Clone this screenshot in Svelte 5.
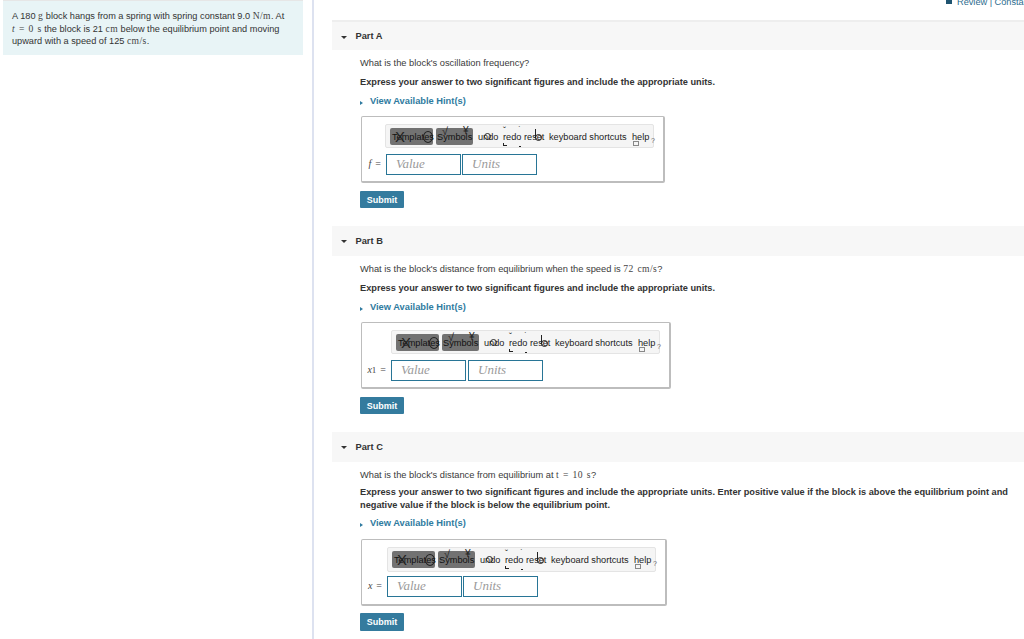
<script>
  const parts = [
    { id: 'a', name: 'Part A', label: 'f', sub: '', q: ["What is the block's oscillation frequency?"], extra: '' },
    { id: 'b', name: 'Part B', label: 'x', sub: '1', q: ["What is the block's distance from equilibrium when the speed is ", '72 cm/s', '?'], extra: '' },
    { id: 'c', name: 'Part C', label: 'x', sub: '', q: ["What is the block's distance from equilibrium at ", 't = 10 s', '?'], extra: ' Enter positive value if the block is above the equilibrium point and negative value if the block is below the equilibrium point.' }
  ];
</script>

<div class="page">
  <aside class="left">
    <div class="intro">
      A 180 <span class="m">g</span> block hangs from a spring with spring constant 9.0 <span class="m">N/m</span>. At<br />
      <span class="m"><i>t</i> = 0 s</span> the block is 21 <span class="m">cm</span> below the equilibrium point and moving<br />
      upward with a speed of 125 <span class="m">cm/s</span>.
    </div>
  </aside>
  <main class="right">
    <div class="top"><span class="sq"></span><span>Review | Constants</span></div>
    {#each parts as p}
      <section class="part {p.id}">
        <header class="head"><span class="caret"></span><span>{p.name}</span></header>
        <div class="body">
          <p class="q">{p.q[0]}{#if p.q[1]}<span class="m">{p.q[1]}</span>{p.q[2]}{/if}</p>
          <p class="ex">Express your answer to two significant figures and include the appropriate units.{p.extra}</p>
          <p class="hint"><span class="tri"></span>View Available Hint(s)</p>
          <div class="box">
            <div class="tools">
              <span class="btn t">Templates<i class="ov x">X</i><i class="ov circ"></i></span>
              <span class="btn s">Symbols<i class="ov chk">√</i><i class="ov y">¥</i></span>
              <span class="tl undo">undo<i class="ov arrow"></i></span>
              <span class="tl redo">redo<i class="ov tick1">ˇ</i><i class="ov tick2">ˋ</i><i class="ov tick3"></i><i class="ov tick4"></i></span>
              <span class="tl reset">reset<i class="ov rs"></i><i class="ov rb"></i></span>
              <span class="tl kb">keyboard shortcuts</span>
              <span class="tl help">help<i class="ov q1">?</i><i class="ov k1"></i></span>
            </div>
            <div class="row">
              <span class="lab"><i>{p.label}</i>{#if p.sub}<span class="sub">{p.sub}</span>{/if} =</span>
              <span class="inp">Value</span>
              <span class="inp u">Units</span>
            </div>
          </div>
          <button class="submit">Submit</button>
        </div>
      </section>
    {/each}
  </main>
</div>

<style>
  :global(body) { margin: 0; background: #fff; }
  .page {
    display: flex; width: 1024px; height: 639px; overflow: hidden;
    font-family: "Liberation Sans", Arial, sans-serif; color: #333; font-size: 9.3px;
  }
  .left { width: 312px; flex: none; border-right: 2px solid #dde2f0; }
  .intro {
    margin: 0 9px 0 3px; padding: 9px 9px 7px; height: 38px; background: #e8f4f6; border-top: 1px solid #e6e6e6;
    line-height: 12.5px; font-size: 9.2px; white-space: nowrap;
  }
  .m { font-family: "Liberation Serif", serif; font-size: 9.6px; line-height: 0; letter-spacing: .4px; word-spacing: 1px; color: #444; }
  .right { flex: 1; min-width: 0; padding-left: 18px; }
  .top {
    height: 20px; display: flex; gap: 5px; padding-left: 614px; white-space: nowrap;
    color: #2c6c8e; font-size: 9.2px; line-height: 4px; overflow: hidden; box-sizing: border-box;
  }
  .sq { width: 6px; height: 4px; background: #1f5470; flex: none; }
  .part { height: 206px; }
  .head {
    height: 28px; display: flex; align-items: center; background: #f7f7f7; border-top: 2px solid #eee;
    font-weight: bold; font-size: 9.3px; color: #333;
  }
  .b .head, .c .head { border-top-color: #f7f7f7; height: 29px; border-top-width: 0; padding-bottom: 1px; }
  .caret {
    width: 0; height: 0; border: 3px solid transparent; border-top: 3px solid #333; border-bottom: 0;
    margin: 2px 8.5px 0 9px;
  }
  .body { padding-left: 28px; }
  p { margin: 0; }
  .q { padding-top: 7px; line-height: 13px; color: #3a3a3a; }
  .ex { margin-top: 6px; line-height: 13px; font-weight: bold; color: #333; font-size: 9.22px; padding-right: 14px; }
  .c .ex { margin-top: 4px; }
  .hint { margin-top: 6px; line-height: 13px; font-weight: bold; color: #2f7ba0; display: flex; align-items: center; }
  .c .hint { margin-top: 5px; }
  .tri { width: 0; height: 0; border: 2.5px solid transparent; border-left: 3px solid #2f7ba0; border-right: 0; margin-right: 7px; margin-top: 3px; }
  .box {
    margin: 8px 0 8px 1px; height: 67px; box-sizing: border-box; border: 1px solid #bdbdbd; border-bottom-width: 2px; border-right-width: 2px; border-radius: 2px;
    background: #fff; width: 304px; padding: 7px 0 0 23px;
  }
  .b .box { width: 310px; padding-left: 29px; }
  .c .box { width: 306px; padding-left: 25px; margin: 9px 0 7px 1px; }
  .tools {
    width: 269px; height: 24px; box-sizing: border-box; border: 1px solid #e4e4e4; border-radius: 2px; background: #f5f5f5;
    color: #222; position: relative; font-size: 9.2px;
  }
  .tools > span { position: absolute; top: 3px; height: 17px; line-height: 18px; white-space: nowrap; }
  .btn { background: #727272; border-radius: 2px; color: #111; box-sizing: border-box; }
  .btn.t { left: 4px; width: 43px; padding-left: 2px; }
  .btn.s { left: 50px; width: 37px; padding-left: 1px; }
  .tl.undo { left: 92px; }
  .tl.redo { left: 117px; }
  .tl.reset { left: 138px; }
  .tl.kb { left: 163px; }
  .tl.help { left: 246px; }
  .ov { position: absolute; font-style: normal; color: #222; line-height: 1; }
  .x { left: 5px; top: 1px; font-size: 15px; }
  .circ { left: 33px; top: 3px; width: 8px; height: 10px; border: 1px solid #222; border-radius: 50%; }
  .chk { left: 6px; top: -2px; font-size: 11px; }
  .y { left: 27px; top: -2px; font-size: 10px; }
  .arrow { left: 6px; top: 5px; width: 5px; height: 5px; border: 1px solid #222; border-radius: 50%; }
  .tick1 { left: 0; top: -2px; font-size: 9px; }
  .tick2 { left: 15px; top: -3px; font-size: 8px; }
  .tick3 { left: 0; top: 15px; width: 3px; height: 2px; border-left: 1px solid #222; border-bottom: 1px solid #222; }
  .tick4 { left: 16px; top: 16px; width: 2px; height: 2px; border-bottom: 1px solid #222; }
  .rs { left: 11px; top: 6px; width: 5px; height: 5px; border: 1px solid #222; border-radius: 50%; }
  .rb { left: 11px; top: 1px; width: 1px; height: 9px; background: #222; }
  .q1 { left: 19px; top: 9px; font-size: 7px; color: #666; }
  .k1 { left: 1px; top: 13px; width: 4px; height: 3px; border: 1px solid #888; }
  .row { display: flex; margin-top: 6px; margin-left: 1px; position: relative; height: 21px; }
  .b .row { margin-left: 0; }
  .c .tools { height: 25px; }
  .c .row { margin-top: 4px; margin-left: 0; }
  .lab { position: absolute; right: 100%; margin-right: 5px; white-space: nowrap; font-family: "Liberation Serif", serif; font-size: 10px; word-spacing: 1.5px; color: #444; line-height: 19px; }
  .sub { font-size: 9px; }
  .inp {
    width: 75px; height: 21px; box-sizing: border-box; border: 1px solid #287596; margin-right: 1px;
    font: italic 13px/17px "Liberation Serif", serif; color: #9a9a9a; padding-left: 9px; background: #fff;
  }
  .b .inp { margin-right: 2px; }
  .submit {
    display: block; width: 44px; height: 17px; padding: 0; margin: 0; border: 0; border-radius: 1px; background: #347b9e; color: #fff;
    font: bold 9px "Liberation Sans", Arial, sans-serif;
  }
  .c .submit { height: 18px; }
</style>
